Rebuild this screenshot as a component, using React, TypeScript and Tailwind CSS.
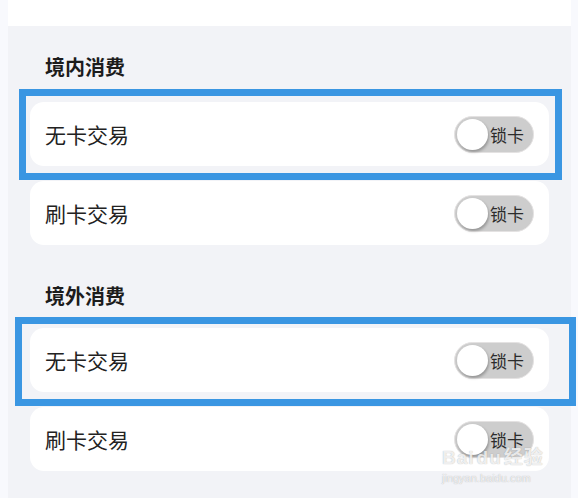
import React from 'react';

const font = { fontFamily: '"Noto Sans CJK SC", "Noto Sans", sans-serif' };

function LockToggle() {
  return (
    <div className="flex items-center w-[80px] h-[37px] rounded-full bg-[#cdcdcd] border border-[#e4e2e2] pl-[2px] pr-[9px]">
      <div className="w-[31px] h-[31px] rounded-full bg-white shadow-[1px_2px_3px_rgba(0,0,0,0.28)]" />
      <span className="ml-auto text-[17px] leading-none text-[#2b2b2b]">锁卡</span>
    </div>
  );
}

function Row({ label, mark }: { label: string; mark?: 'a' | 'b' }) {
  return (
    <div className="relative h-[64px] rounded-[14px] bg-white flex items-center justify-between pl-[15px] pr-[15px]">
      <span className="text-[21px] leading-none text-[#222]">{label}</span>
      <LockToggle />
      {mark === 'a' && (
        <div className="absolute pointer-events-none -left-[11px] -top-[13px] -right-[13px] -bottom-[14px] border-[7px] border-[#3a96e2]" />
      )}
      {mark === 'b' && (
        <div className="absolute pointer-events-none -left-[15px] -top-[11px] -right-[27px] -bottom-[14px] border-[7px] border-[#3a96e2]" />
      )}
    </div>
  );
}

function Section({ title, first }: { title: string; first?: boolean }) {
  return (
    <div className={first ? 'pt-[27px]' : 'pt-[37px]'}>
      <h3 className="pl-[15px] text-[20px] leading-[28px] font-bold text-[#1c1c1c]">{title}</h3>
      <div className={`flex flex-col gap-[15px] ${first ? 'mt-[21px]' : 'mt-[18px]'}`}>
        <Row label="无卡交易" mark={first ? 'a' : 'b'} />
        <Row label="刷卡交易" />
      </div>
    </div>
  );
}

export default function App() {
  return (
    <div className="relative w-[578px] h-[498px] overflow-hidden bg-[#f8f9fd] pl-[8px] pr-[7px]" style={font}>
      <div className="h-full bg-[#f2f3f7]">
        <div className="h-[26px] bg-white" />
        <div className="px-[22px]">
          <Section title="境内消费" first />
          <Section title="境外消费" />
        </div>
      </div>

      {/* watermark */}
      <div className="absolute left-[442px] top-[448px] pointer-events-none text-white/80 [text-shadow:0_0_1px_rgba(0,0,0,0.35)]">
        <div className="text-[19px] leading-[20px] font-bold tracking-[1px]" style={{ fontFamily: '"Liberation Sans", "Noto Sans CJK SC", sans-serif' }}>
          Bai<span className="px-[2px]">du</span>经验
        </div>
        <div className="mt-[5px] text-[11px] leading-[11px]" style={{ fontFamily: '"Liberation Sans", sans-serif' }}>
          jingyan.baidu.com
        </div>
      </div>
    </div>
  );
}
